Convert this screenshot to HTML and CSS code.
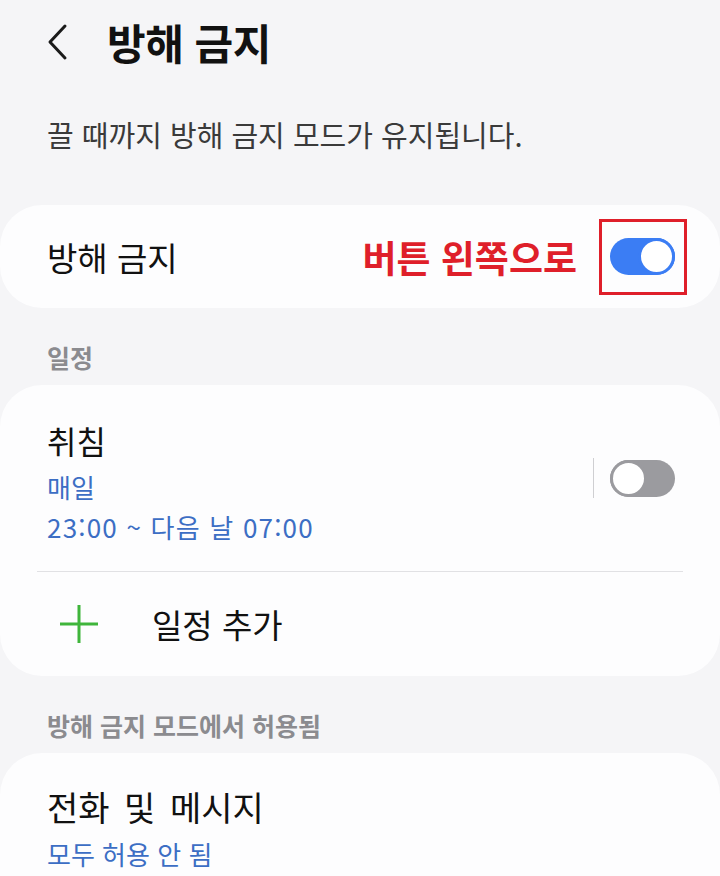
FILE: index.html
```html
<!DOCTYPE html>
<html lang="ko">
<head>
<meta charset="utf-8">
<title>방해 금지</title>
<link rel="stylesheet" href="styles.css">
</head>
<body>
<div class="screen">
  <header class="appbar">
    <span class="back" aria-label="뒤로">
      <svg width="24" height="38" viewBox="0 0 24 38"><path d="M20 3 L5 19 L20 35" fill="none" stroke="#1a1a1a" stroke-width="3" stroke-linecap="round" stroke-linejoin="round"/></svg>
    </span>
    <h1 class="title">방해 금지</h1>
  </header>

  <p class="intro">끌 때까지 방해 금지 모드가 유지됩니다.</p>

  <section class="card card-main">
    <span class="main-label">방해 금지</span>
    <span class="note">버튼 왼쪽으로</span>
    <span class="highlight">
      <span class="switch on"><span class="knob"></span></span>
    </span>
  </section>

  <h2 class="section-title">일정</h2>

  <section class="card">
    <div class="schedule">
      <div class="schedule-text">
        <div class="item-title">취침</div>
        <div class="item-sub">매일</div>
        <div class="item-sub time">23:00 ~ 다음 날 07:00</div>
      </div>
      <span class="vdivider"></span>
      <span class="switch off"><span class="knob"></span></span>
    </div>
    <div class="divider"></div>
    <div class="add-row">
      <span class="plus">
        <svg width="40" height="40" viewBox="0 0 40 40"><path d="M20 1 V39 M1 20 H39" stroke="#3fb53b" stroke-width="3"/></svg>
      </span>
      <span class="add-label">일정 추가</span>
    </div>
  </section>

  <h2 class="section-title">방해 금지 모드에서 허용됨</h2>

  <section class="card card-last">
    <div class="item-title wide">전화 및 메시지</div>
    <div class="item-sub">모두 허용 안 됨</div>
  </section>
</div>
</body>
</html>
```

FILE: styles.css
```css
html, body {
  margin: 0;
  padding: 0;
  background: #f5f5f7;
}
body {
  font-family: "Noto Sans CJK KR", "Noto Sans", sans-serif;
  color: #111;
  width: 720px;
  height: 876px;
  overflow: hidden;
}
.screen {
  display: flex;
  flex-direction: column;
}
.appbar {
  display: flex;
  align-items: center;
  height: 84px;
  padding-left: 45px;
}
.back {
  display: flex;
  width: 62px;
}
.title {
  margin: 0;
  font-size: 42px;
  font-weight: 700;
  line-height: 84px;
  letter-spacing: -0.5px;
  color: #111;
}
.intro {
  margin: 30px 0 0;
  padding-left: 47px;
  font-size: 29px;
  line-height: 40px;
  color: #3a3a3a;
}
.card {
  background: #fdfdfe;
  border-radius: 42px;
}
.card-main {
  margin-top: 51px;
  height: 103px;
  display: flex;
  align-items: center;
  padding: 0 33px 0 47px;
}
.main-label {
  font-size: 33px;
  line-height: 40px;
  flex: 1;
}
.note {
  font-size: 37px;
  font-weight: 700;
  color: #df1f2a;
  line-height: 40px;
  margin-right: 22px;
}
.highlight {
  display: flex;
  border: 3px solid #df1f2a;
  padding: 16px 9px 17px 8px;
}
.switch {
  position: relative;
  display: block;
  width: 65px;
  height: 37px;
  border-radius: 19px;
  box-sizing: border-box;
}
.switch .knob {
  position: absolute;
  top: 0;
  width: 37px;
  height: 37px;
  border-radius: 50%;
  background: #fff;
  box-sizing: border-box;
}
.switch.on { background: #3b7df4; }
.switch.on .knob { right: 0; border: 3.5px solid #3b7df4; }
.switch.off { background: #9b9b9f; }
.switch.off .knob { left: 0; border: 3.5px solid #9b9b9f; }

.section-title {
  margin: 0;
  padding: 29px 0 8px 47px;
  font-size: 25px;
  font-weight: 700;
  line-height: 40px;
  color: #8b8b8f;
}
.schedule {
  display: flex;
  align-items: center;
  padding: 35px 45px 24px 47px;
}
.schedule-text {
  flex: 1;
}
.item-title {
  font-size: 32px;
  line-height: 40px;
  color: #111;
}
.item-title.wide {
  font-size: 34px;
  word-spacing: 5px;
}
.item-sub {
  font-size: 26px;
  line-height: 40px;
  color: #3c6ec4;
}
.item-sub.time {
  letter-spacing: 1.2px;
}
.item-title + .item-sub {
  margin-top: 7px;
}
.schedule .vdivider {
  width: 1px;
  height: 40px;
  background: #cfcfd2;
  margin-right: 16px;
  align-self: flex-start;
  margin-top: 38px;
}
.schedule .switch {
  align-self: flex-start;
  margin-top: 40px;
}
.divider {
  height: 1px;
  background: #e1e1e4;
  margin: 0 37px;
}
.add-row {
  display: flex;
  align-items: center;
  height: 104px;
  padding-left: 59px;
}
.plus {
  display: flex;
  width: 93px;
}
.add-label {
  font-size: 33px;
  line-height: 40px;
}
.card-last {
  padding: 34px 47px 40px;
  border-radius: 42px 42px 0 0;
}
```
